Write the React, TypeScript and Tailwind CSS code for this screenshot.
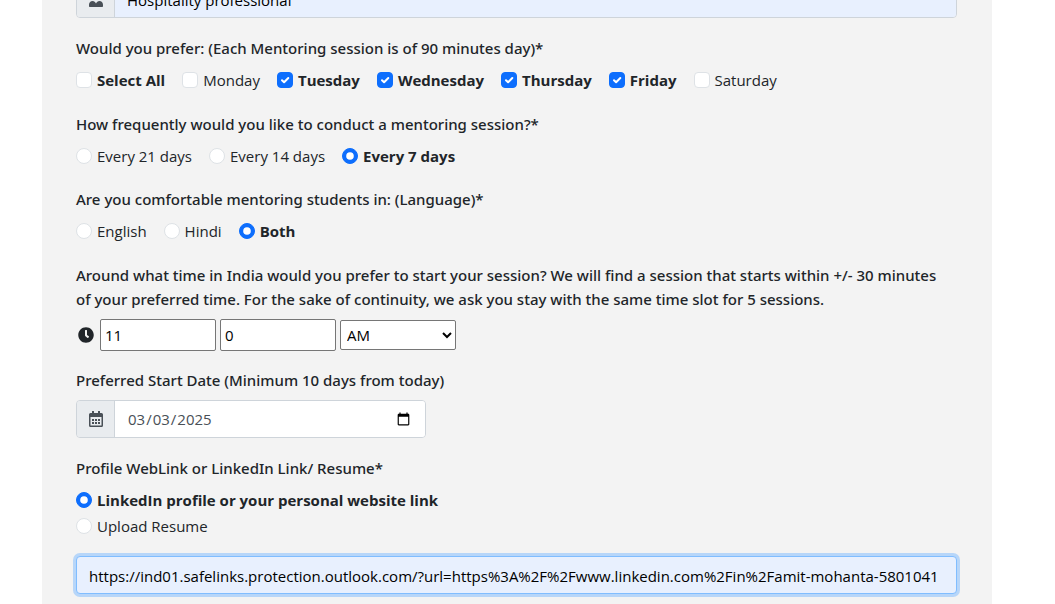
import { useState } from "react";
import type { ReactNode } from "react";
import { FaClock } from "react-icons/fa";

const DAYS = ["Monday", "Tuesday", "Wednesday", "Thursday", "Friday", "Saturday"];

type ChoiceProps = {
  type: "checkbox" | "radio";
  name: string;
  label: string;
  checked: boolean;
  bold?: boolean;
  onChange: () => void;
};

function Choice({ type, name, label, checked, bold, onChange }: ChoiceProps) {
  return (
    <label className="flex h-6 items-center gap-[5px]">
      <span className="relative flex size-4 shrink-0">
        <input
          type={type}
          name={name}
          checked={checked}
          onChange={onChange}
          className={`size-4 appearance-none border border-[#dee2e6] bg-white checked:border-[#0d6efd] checked:bg-[#0d6efd] ${type === "radio" ? "rounded-full" : "rounded-[4px]"}`}
        />
        {checked && (
          <svg viewBox="0 0 16 16" className="pointer-events-none absolute inset-0 size-4" aria-hidden="true">
            {type === "radio" ? (
              <circle cx="8" cy="8" r="3.8" fill="#fff" />
            ) : (
              <path d="M5 8.2 7.1 10.3 11.3 6" fill="none" stroke="#fff" strokeWidth="2" strokeLinecap="round" strokeLinejoin="round" />
            )}
          </svg>
        )}
      </span>
      <span className={bold || checked ? "font-bold" : ""}>{label}</span>
    </label>
  );
}

function PersonIcon() {
  return (
    <svg width="16" height="16" viewBox="0 0 16 16" fill="currentColor" role="img" aria-label="Profession">
      <circle cx="8" cy="4" r="4" />
      <path d="M1 15v-1.2C1 11.6 2.6 10 4.6 10 6.2 10 7.2 11 8 12.4 8.8 11 9.8 10 11.4 10c2 0 3.600 1.600 3.600 3.800V15c0 .6-.4 1-1 1H2c-.6 0-1-.4-1-1Z" />
    </svg>
  );
}

function CalendarIcon() {
  return (
    <svg width="16" height="16" viewBox="0 0 16 16" fill="currentColor" aria-hidden="true">
      <path d="M4 0h2v2h4V0h2v2h1.500A1.500 1.500 0 0 1 15 3.500v11a1.500 1.500 0 0 1-1.500 1.500h-11A1.500 1.500 0 0 1 1 14.500v-11A1.500 1.500 0 0 1 2.500 2H4ZM2.500 6v8.500h11V6Z" fillRule="evenodd" />
      <path d="M4 8h2v2H4ZM7 8h2v2H7ZM10 8h2v2h-2ZM4 11h2v2H4ZM7 11h2v2H7ZM10 11h2v2h-2Z" />
    </svg>
  );
}

function Group({ title, className, children }: { title: string; className: string; children: ReactNode }) {
  return (
    <fieldset className={className}>
      <legend className="mb-2 pr-1 font-['Noto_Sans','Open_Sans',sans-serif] font-medium">{title}</legend>
      {children}
    </fieldset>
  );
}

function RadioRow({ name, options, initial }: { name: string; options: string[]; initial: string }) {
  const [value, setValue] = useState(initial);
  return (
    <div className="flex flex-wrap gap-x-[17px]">
      {options.map((o) => (
        <Choice key={o} type="radio" name={name} label={o} checked={value === o} onChange={() => setValue(o)} />
      ))}
    </div>
  );
}

export default function App() {
  const [days, setDays] = useState(["Tuesday", "Wednesday", "Thursday", "Friday"]);
  const [source, setSource] = useState("link");
  const all = days.length === DAYS.length;
  const toggle = (d: string) => setDays(days.includes(d) ? days.filter((x) => x !== d) : [...days, d]);

  return (
    <div className="min-h-screen bg-white pr-[21px] font-['Open_Sans',sans-serif] text-[15px] leading-6 text-[#212529]">
      <main className="mx-auto min-h-screen max-w-[950px] overflow-hidden bg-[#f3f3f3] pr-[35px] pb-2 pl-[34px]">
        <form className="-mt-5">
          <div className="flex h-[38px] overflow-hidden rounded-[4px] border border-[#ced4da]">
            <label htmlFor="profession" className="flex w-[38px] shrink-0 items-center justify-center border-r border-[#ced4da] bg-[#e9ecef] text-[#495057]">
              <PersonIcon />
            </label>
            <input id="profession" defaultValue="Hospitality professional" className="min-w-0 flex-1 bg-[#e8f0fe] px-3 pt-0.5 text-black outline-none" />
          </div>

          <Group title="Would you prefer: (Each Mentoring session is of 90 minutes day)*" className="mt-[18px]">
            <div className="flex flex-wrap gap-x-[17px]">
              <Choice type="checkbox" name="all-days" label="Select All" bold checked={all} onChange={() => setDays(all ? [] : DAYS)} />
              {DAYS.map((d) => (
                <Choice key={d} type="checkbox" name="days" label={d} checked={days.includes(d)} onChange={() => toggle(d)} />
              ))}
            </div>
          </Group>

          <Group title="How frequently would you like to conduct a mentoring session?*" className="mt-5">
            <RadioRow name="frequency" options={["Every 21 days", "Every 14 days", "Every 7 days"]} initial="Every 7 days" />
          </Group>

          <Group title="Are you comfortable mentoring students in: (Language)*" className="mt-[19px]">
            <RadioRow name="language" options={["English", "Hindi", "Both"]} initial="Both" />
          </Group>

          <Group
            title="Around what time in India would you prefer to start your session? We will find a session that starts within +/- 30 minutes of your preferred time. For the sake of continuity, we ask you stay with the same time slot for 5 sessions."
            className="mt-5"
          >
            <div className="flex items-center gap-1">
              <FaClock size={16} className="mr-0.5 ml-0.5" aria-hidden="true" />
              <input aria-label="Hour" defaultValue="11" className="h-8 w-[116px] rounded-[2px] border border-[#767676] bg-white px-1 text-black" />
              <input aria-label="Minute" defaultValue="0" className="h-8 w-[116px] rounded-[2px] border border-[#767676] bg-white px-1 text-black" />
              <select aria-label="AM or PM" defaultValue="AM" className="h-[30px] w-[116px] rounded-[2px] border border-[#767676] bg-white px-0.5 text-black">
                <option>AM</option>
                <option>PM</option>
              </select>
            </div>
          </Group>

          <div className="mt-[17px]">
            <label htmlFor="start-date" className="mb-2 block font-['Noto_Sans','Open_Sans',sans-serif] font-medium">
              Preferred Start Date (Minimum 10 days from today)
            </label>
            <div className="flex h-[38px] max-w-[350px] overflow-hidden rounded-[4px] border border-[#ced4da]">
              <span className="flex w-[38px] shrink-0 items-center justify-center border-r border-[#ced4da] bg-[#e9ecef] text-[#495057]">
                <CalendarIcon />
              </span>
              <input id="start-date" type="date" defaultValue="2025-03-03" className="min-w-0 flex-1 bg-white px-3 text-[#495057] outline-none" />
            </div>
          </div>

          <Group title="Profile WebLink or LinkedIn Link/ Resume*" className="mt-[18px]">
            <div className="flex flex-col items-start gap-0.5">
              <Choice type="radio" name="source" label="LinkedIn profile or your personal website link" checked={source === "link"} onChange={() => setSource("link")} />
              <Choice type="radio" name="source" label="Upload Resume" checked={source === "upload"} onChange={() => setSource("upload")} />
            </div>
          </Group>
          <input
            aria-label="Profile link"
            defaultValue="https://ind01.safelinks.protection.outlook.com/?url=https%3A%2F%2Fwww.linkedin.com%2Fin%2Famit-mohanta-5801041"
            className="mt-[18px] block h-[38px] w-full rounded-[4px] border border-[#80bdff] bg-[#e8f0fe] px-3 pt-0.5 text-black ring-3 ring-[#b7d6f9] outline-none"
          />
        </form>
      </main>
    </div>
  );
}
